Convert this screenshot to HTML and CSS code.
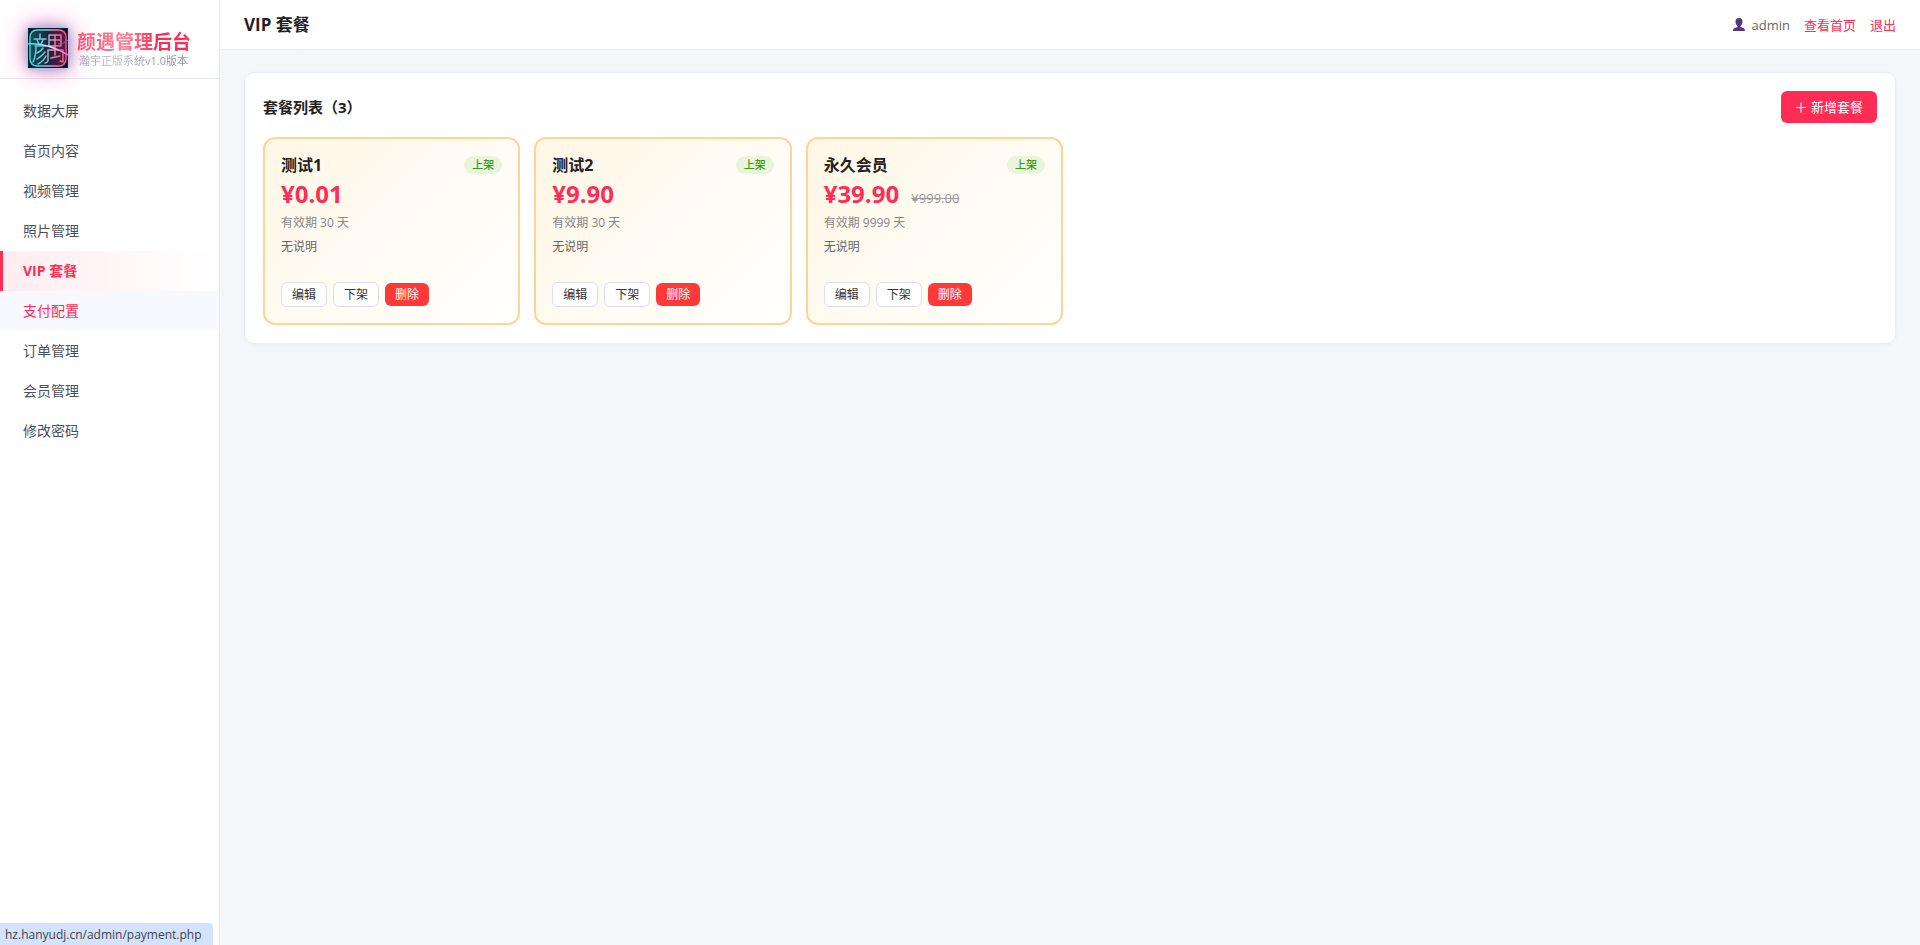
FILE: index.html
```
<!DOCTYPE html>
<html lang="zh-CN">
<head>
    <meta charset="UTF-8">
    <meta name="viewport" content="width=device-width, initial-scale=1.0">
    <title>VIP 套餐</title>
    <link rel="stylesheet" href="styles.css">
</head>
<body>
    <div class="layout">
        <aside class="sidebar">
            <div class="brand">
                <svg class="brand-logo" viewBox="0 0 40 40" aria-hidden="true">
                    <defs>
                        <linearGradient id="logoBg" x1="0" y1="0" x2="1" y2="0">
                            <stop offset="0" stop-color="#0b4f5c"/>
                            <stop offset="0.5" stop-color="#1f2440"/>
                            <stop offset="1" stop-color="#6b1242"/>
                        </linearGradient>
                        <linearGradient id="neon" gradientUnits="userSpaceOnUse" x1="2" y1="0" x2="38" y2="0">
                            <stop offset="0" stop-color="#43cfd0"/>
                            <stop offset="0.45" stop-color="#7fc8cf"/>
                            <stop offset="0.65" stop-color="#e08fb0"/>
                            <stop offset="1" stop-color="#e0508a"/>
                        </linearGradient>
                        <linearGradient id="beam" gradientUnits="userSpaceOnUse" x1="0" y1="0" x2="40" y2="0">
                            <stop offset="0" stop-color="#25e4ec"/>
                            <stop offset="0.55" stop-color="#e8e4ff"/>
                            <stop offset="1" stop-color="#ff5aa8"/>
                        </linearGradient>
                    </defs>
                    <rect width="40" height="40" fill="#081c2b"/>
                    <rect x="1" y="1" width="38" height="38" rx="7" fill="url(#logoBg)"/>
                    <g fill="none" stroke="url(#neon)" stroke-linecap="round" stroke-linejoin="round">
                        <rect x="2" y="2" width="36" height="36" rx="7" stroke-width="1.4"/>
                        <path stroke-width="1.5" d="M12 6v4M6 11h12M9 12l2 4M15 12l-2 4M7 18h11M8 18c0 7-1 12-3 16M15 20c-2 3-3 4-6 5M17 24c-3 4-5 5-8 7M18 28c-2 4-4 6-8 8"/>
                        <path stroke-width="1.5" d="M21 7h12v11H21zM21 12h12M27 7v20M20 33V22h15v12l-3-1M23 30l9-2M20 33c-1 2-2 2-3 2"/>
                    </g>
                    <path d="M0 16C12 15 25 18 40 27" fill="none" stroke="url(#beam)" stroke-width="1.6"/>
                    <path d="M30 16q6 0 10-4" fill="none" stroke="#3c8fb5" stroke-width="1"/>
                </svg>
                <div class="brand-text">
                    <div class="brand-name">颜遇管理后台</div>
                    <div class="brand-version">瀚宇正版系统v1.0版本</div>
                </div>
            </div>
            <nav class="menu">
                <a href="#">数据大屏</a>
                <a href="#">首页内容</a>
                <a href="#">视频管理</a>
                <a href="#">照片管理</a>
                <a href="#" class="active">VIP 套餐</a>
                <a href="#" class="hover">支付配置</a>
                <a href="#">订单管理</a>
                <a href="#">会员管理</a>
                <a href="#">修改密码</a>
            </nav>
        </aside>

        <div class="main">
            <header class="topbar">
                <h1>VIP 套餐</h1>
                <div class="topbar-right">
                    <span class="user">
                        <svg class="user-icon" viewBox="0 0 12 13" aria-hidden="true">
                            <path fill="#53347f" d="M6 0C3.6 0 2.4 1.6 2.5 3.8c0 1.8.8 3.3 2 4.2v1L1.600 10Q0 10.600 0 13h12q0-2.400-1.600-3L7.500 9V8c1.200-.9 2-2.400 2-4.200C9.600 1.600 8.400 0 6 0z"/>
                        </svg>
                        admin
                    </span>
                    <a href="#">查看首页</a>
                    <a href="#">退出</a>
                </div>
            </header>

            <main class="content">
                <section class="card">
                    <div class="card-head">
                        <h2>套餐列表（3）</h2>
                        <button type="button" class="btn btn-primary">＋ 新增套餐</button>
                    </div>
                    <div class="plans">
                        <article class="plan">
                            <div class="plan-head">
                                <h3>测试1</h3>
                                <span class="badge">上架</span>
                            </div>
                            <div class="price">¥0.01</div>
                            <div class="period">有效期 30 天</div>
                            <div class="desc">无说明</div>
                            <div class="actions">
                                <button type="button" class="btn btn-sm">编辑</button>
                                <button type="button" class="btn btn-sm">下架</button>
                                <button type="button" class="btn btn-sm btn-danger">删除</button>
                            </div>
                        </article>
                        <article class="plan">
                            <div class="plan-head">
                                <h3>测试2</h3>
                                <span class="badge">上架</span>
                            </div>
                            <div class="price">¥9.90</div>
                            <div class="period">有效期 30 天</div>
                            <div class="desc">无说明</div>
                            <div class="actions">
                                <button type="button" class="btn btn-sm">编辑</button>
                                <button type="button" class="btn btn-sm">下架</button>
                                <button type="button" class="btn btn-sm btn-danger">删除</button>
                            </div>
                        </article>
                        <article class="plan">
                            <div class="plan-head">
                                <h3>永久会员</h3>
                                <span class="badge">上架</span>
                            </div>
                            <div class="price">¥39.90 <del>¥999.00</del></div>
                            <div class="period">有效期 9999 天</div>
                            <div class="desc">无说明</div>
                            <div class="actions">
                                <button type="button" class="btn btn-sm">编辑</button>
                                <button type="button" class="btn btn-sm">下架</button>
                                <button type="button" class="btn btn-sm btn-danger">删除</button>
                            </div>
                        </article>
                    </div>
                </section>
            </main>
        </div>
    </div>

    <div class="link-status">hz.hanyudj.cn/admin/payment.php</div>
</body>
</html>
```
FILE: styles.css
```
* {
    box-sizing: border-box;
    margin: 0;
    padding: 0;
}

body {
    font-family: "Open Sans", "Noto Sans CJK SC", sans-serif;
    font-size: 14px;
    line-height: 20px;
    color: #222;
    background: #f4f6fa;
}

a {
    text-decoration: none;
}

.layout {
    display: flex;
    min-height: 100vh;
}

/* sidebar */
.sidebar {
    width: 220px;
    flex-shrink: 0;
    background: #fff;
    border-right: 1px solid #e8eaf2;
}

.brand {
    display: flex;
    align-items: center;
    gap: 9px;
    padding: 28px 20px 10px 28px;
    border-bottom: 1px solid #e8eaf2;
}

.brand-logo {
    width: 40px;
    height: 40px;
    flex-shrink: 0;
    box-shadow: 0 0 10px rgba(60, 170, 220, 0.8), 0 0 24px rgba(255, 50, 150, 0.75);
}

.brand-text {
    padding-top: 2px;
    white-space: nowrap;
}

.brand-name {
    font-size: 19px;
    font-weight: 700;
    line-height: 24px;
    background: linear-gradient(90deg, #ff4d6d, #ff8598 40%, #ff2d55 70%);
    -webkit-background-clip: text;
    background-clip: text;
    color: transparent;
}

.brand-version {
    padding-left: 2px;
    font-size: 11px;
    line-height: 14px;
    background: linear-gradient(90deg, #a0a4b4, #bcbec9 40%, #9293a0 70%);
    -webkit-background-clip: text;
    background-clip: text;
    color: transparent;
}

.menu {
    padding: 12px 0;
}

.menu a {
    display: block;
    padding: 10px 20px;
    border-left: 3px solid transparent;
    color: #4a4f5e;
}

.menu a:hover,
.menu a.hover {
    background: #f7f9fe;
    color: #ff2d55;
}

.menu a.active {
    border-left-color: #ff2d55;
    background: linear-gradient(90deg, #ffedf0, #fff);
    color: #ff2d55;
    font-weight: 700;
}

/* main */
.main {
    flex: 1;
    min-width: 0;
}

.topbar {
    display: flex;
    align-items: center;
    justify-content: space-between;
    height: 50px;
    padding: 0 24px;
    background: #fff;
    border-bottom: 1px solid #e8eaf2;
}

.topbar h1 {
    font-size: 17px;
    font-weight: 700;
}

.topbar-right {
    display: flex;
    align-items: center;
    gap: 14px;
    font-size: 13px;
    color: #666;
}

.topbar-right a {
    color: #ff2d55;
}

.user {
    display: flex;
    align-items: center;
    gap: 7px;
}

.user-icon {
    width: 12px;
    height: 13px;
}

.content {
    padding: 22px 24px;
}

.card {
    padding: 18px;
    background: #fff;
    border: 1px solid #ebedf5;
    border-radius: 10px;
    box-shadow: 0 1px 4px rgba(0, 0, 0, 0.04);
}

.card-head {
    display: flex;
    align-items: center;
    justify-content: space-between;
    margin-bottom: 14px;
}

.card-head h2 {
    font-size: 15px;
    font-weight: 700;
}

.btn {
    font-family: inherit;
    border: 1px solid #dcdfe6;
    border-radius: 6px;
    background: #fff;
    color: #333;
    cursor: pointer;
}

.btn-primary {
    padding: 6px 14px;
    border: none;
    background: #ff2d55;
    color: #fff;
    font-size: 13px;
    line-height: 20px;
}

.btn-sm {
    padding: 3px 10px;
    font-size: 12px;
    line-height: 17px;
}

.btn-danger {
    border: none;
    background: #ff3838;
    color: #fff;
}

/* plans */
.plans {
    display: grid;
    grid-template-columns: repeat(auto-fill, minmax(240px, 1fr));
    gap: 14px;
}

.plan {
    padding: 16px;
    border: 2px solid #ffd591;
    border-radius: 12px;
    background: linear-gradient(135deg, #fff7e6, #fff);
}

.plan-head {
    display: flex;
    align-items: center;
    justify-content: space-between;
}

.plan h3 {
    font-size: 16px;
    font-weight: 700;
}

.badge {
    padding: 0 8px;
    border-radius: 9px;
    background: #e8f5dc;
    color: #389e0d;
    font-size: 11px;
    font-weight: 500;
    line-height: 18px;
}

.price {
    margin: 5px 0 6px;
    color: #ff2d55;
    font-size: 24px;
    font-weight: 700;
    line-height: 28px;
}

.price del {
    margin-left: 6px;
    color: #999;
    font-size: 13px;
    font-weight: 400;
    line-height: 14px;
}

.period {
    color: #888;
    font-size: 12px;
    line-height: 18px;
}

.desc {
    min-height: 32px;
    margin: 6px 0 12px;
    color: #666;
    font-size: 12px;
    line-height: 18px;
}

.actions {
    display: flex;
    align-items: center;
    gap: 6px;
}

/* link address in the window corner */
.link-status {
    position: fixed;
    left: 0;
    bottom: 0;
    padding: 2px 11px 0 5px;
    border-top-right-radius: 4px;
    background: #d3e3fd;
    color: #444;
    font-size: 12px;
}
```
